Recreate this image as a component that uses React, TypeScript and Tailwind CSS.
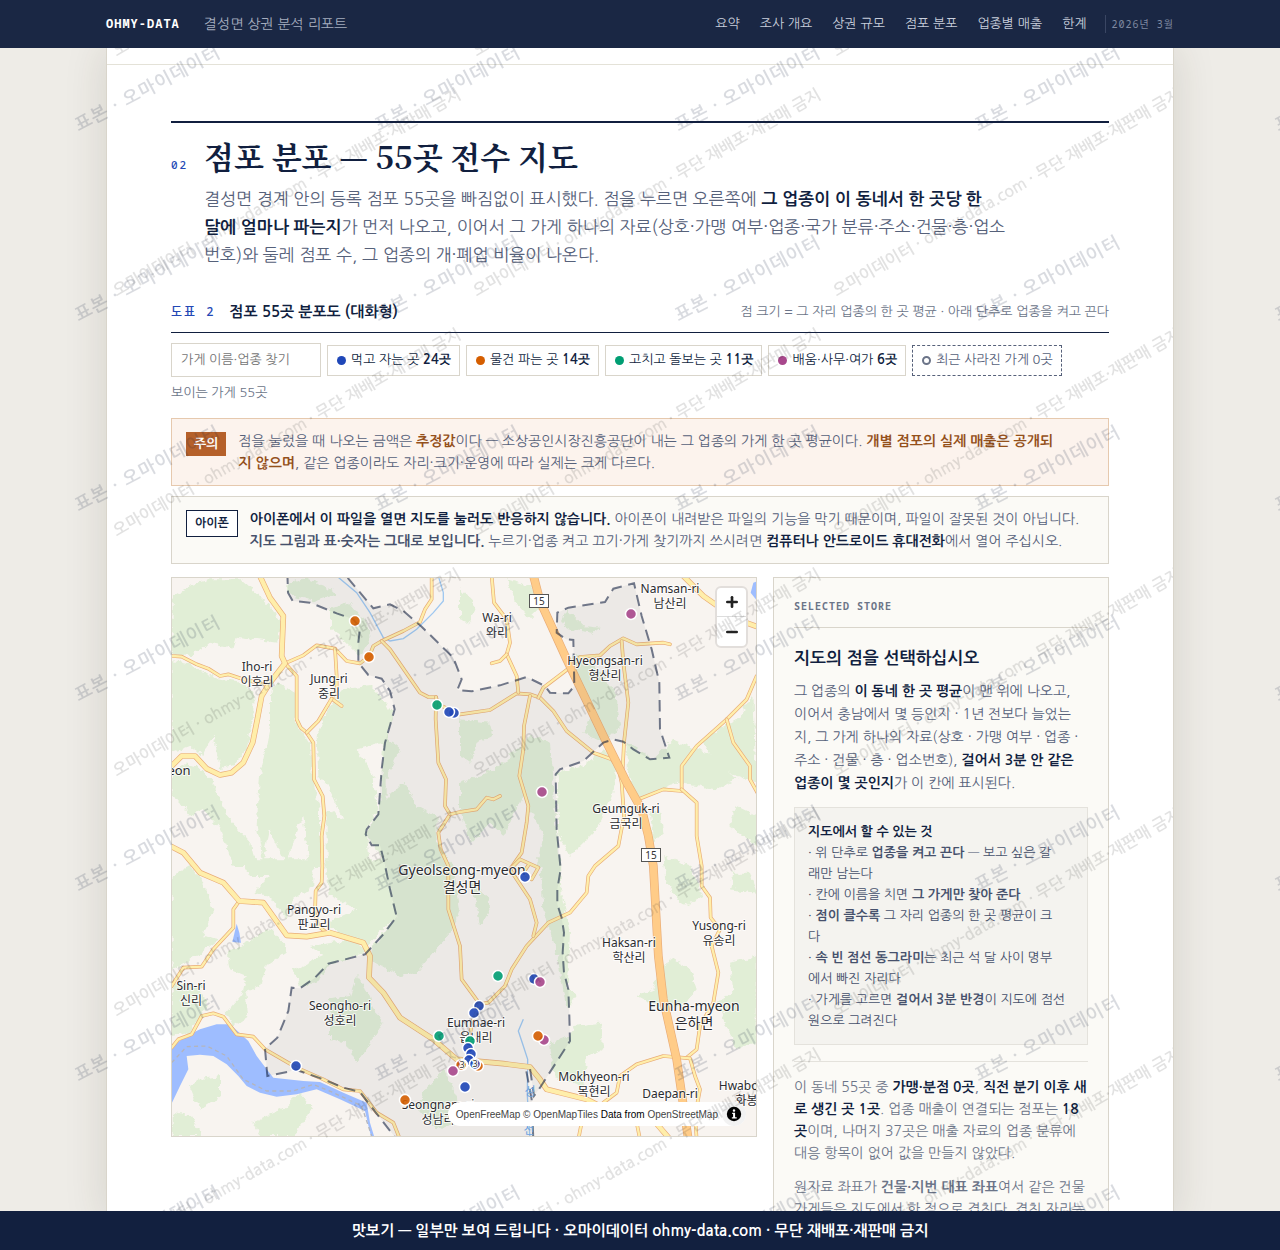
import { Minus, Plus } from 'lucide-react';

const sans = 'font-["Malgun_Gothic","NanumGothic","Noto_Sans_CJK_KR",sans-serif]';
const serif = 'font-["Noto_Serif_CJK_KR","Liberation_Serif",serif]';
const mono = 'font-["Noto_Sans_Mono","DejaVu_Sans_Mono","Noto_Sans_CJK_KR",monospace]';

const BLUE = '#1f47b8';
const ORANGE = '#d55e00';
const GREEN = '#009e73';
const PINK = '#a8478c';

const nav = ['요약', '조사 개요', '상권 규모', '점포 분포', '업종별 매출', '한계'];

const filters = [
  { label: '먹고 자는 곳', count: '24곳', dot: 'bg-[#1f47b8]' },
  { label: '물건 파는 곳', count: '14곳', dot: 'bg-[#d55e00]' },
  { label: '고치고 돌보는 곳', count: '11곳', dot: 'bg-[#009e73]' },
  { label: '배움·사무·여가', count: '6곳', dot: 'bg-[#a8478c]' },
];

// map geometry is drawn at three units per pixel
const greens = [
  '5,60 60,30 120,10 210,10 300,90 335,150 325,200 200,185 190,215 120,200 60,240 5,235',
  '345,30 400,5 470,30 500,55 440,75 370,60',
  '480,95 540,80 590,140 600,190 570,240 530,200 480,160',
  '5,255 60,265 130,305 200,315 250,350 250,420 230,520 190,570 150,580 130,470 100,540 60,510 5,530',
  '300,345 330,320 375,350 378,440 420,500 425,600 450,700 450,870 420,870 400,720 370,790 350,870 300,760 280,860 260,750 270,600 300,450',
  '5,600 40,565 80,570 130,620 170,720 240,800 260,870 190,870 150,760 100,700 60,720 5,650',
  '440,480 470,400 520,340 600,330 650,380 670,420 640,500 560,520 610,600 625,700 590,760 600,870 470,870 470,700 520,730 480,640 445,600',
  '640,480 690,520 650,600 650,670 700,620 740,690 800,720 800,800 850,870 870,1000 850,1060 740,1190 690,1200 650,1180 600,1150 610,1110 680,1020 645,870 590,770 630,700',
  '5,900 60,870 100,920 130,1000 100,1080 150,1090 50,1160 5,1180',
  '210,850 430,850 430,930 380,960 350,1030 300,960 250,950 300,900 240,900',
  '462,850 640,850 680,1020 590,1110 500,1070 470,1040 560,1000 480,960',
  '170,1130 300,1060 340,1100 350,1130 290,1170 270,1230 225,1250 235,1320 190,1350 170,1310 215,1260 230,1200 180,1180',
  '5,1220 90,1230 110,1290 60,1370 5,1380',
  '420,1110 560,1090 590,1130 480,1165 440,1220 390,1230 370,1180 460,1140',
  '480,1270 540,1260 560,1200 600,1260 610,1300 640,1340 560,1460 530,1400 480,1390',
  '60,1530 90,1510 150,1500 150,1560 90,1600',
  '250,1640 340,1600 390,1550 430,1600 370,1680 270,1680',
  '5,1610 60,1620 85,1660 90,1680 5,1680',
  '760,1550 820,1480 860,1560 870,1640 800,1660 740,1590',
  '1010,10 1080,30 1120,90 1080,130 1030,70',
  '870,40 920,90 900,140 870,130',
  '1190,100 1240,150 1290,155 1270,170 1190,160 1175,130',
  '1220,230 1260,260 1300,300 1340,360 1350,450 1300,500 1240,470 1270,400 1210,300',
  '870,430 960,440 970,480 920,500 900,560 870,540',
  '870,620 930,600 1000,560 1080,480 1140,500 1150,600 1160,760 1170,870 1100,870 1120,780 1060,660 1000,780 960,740 900,800 870,700',
  '1160,590 1240,570 1300,520 1340,560 1330,650 1280,760 1200,840 1165,780',
  '1370,500 1450,550 1510,490 1560,510 1640,540 1700,610 1640,640 1520,620 1400,670 1370,580',
  '1590,490 1700,430 1750,360 1760,620 1700,600 1640,560',
  '1700,690 1760,720 1760,810 1680,750',
  '1440,710 1470,700 1480,770 1450,800',
  '1480,840 1560,870 1600,960 1540,990 1490,920',
  '1110,850 1170,860 1175,960 1200,1070 1190,1230 1220,1260 1190,1300 1160,1130 1120,1000',
  '1470,1170 1510,1150 1560,1180 1580,1240 1540,1290 1480,1300 1400,1260 1450,1240',
  '1680,1160 1760,1140 1760,1400 1700,1420 1640,1280 1690,1250',
  '1210,1350 1290,1340 1300,1420 1250,1440 1240,1530 1150,1500 1140,1400 1200,1380',
  '900,900 950,960 960,1010 930,1050 920,990',
  '1690,890 1740,890 1760,950 1680,940',
];

const boundary =
  '352,-10 354,50 368,75 420,80 500,112 550,130 570,155 565,200 565,260 595,297 635,308 660,345 674,400 645,500 635,580 625,715 590,760 587,775 605,808 630,808 645,868 660,940 680,1022 640,1075 585,1135 475,1163 435,1205 390,1237 365,1235 355,1305 322,1385 285,1418 292,1500 380,1482 460,1510 520,1535 570,1548 610,1600 680,1690 1090,1690 1085,1570 1068,1480 1080,1478 1092,1560 1110,1535 1200,1395 1198,1320 1195,1240 1182,1190 1178,1130 1182,1070 1175,1025 1162,985 1162,940 1172,880 1160,760 1157,595 1170,580 1240,555 1300,500 1330,490 1360,497 1390,520 1440,550 1498,545 1470,460 1468,320 1445,220 1415,120 1392,22 1330,38 1305,78 1195,95 1162,110 1160,170 1188,190 1210,192 1213,330 1195,352 1140,350 1125,330 1070,303 990,328 905,346 862,342 875,310 850,245 755,152 700,105 660,85 610,97 520,-10';

const minorRoads = [
  '5,240 35,242 80,265 115,278 150,300 175,295 220,310 285,325',
  '345,262 400,238 440,208 495,218 530,255 570,262 598,240 610,210 635,195 700,165 750,138 765,100 785,70 785,0',
  '345,262 380,300 380,430 392,455 410,470 430,500 432,610 458,660 463,720 455,780 457,870 455,920 437,945 435,1010 445,1050 470,1070',
  '495,218 500,300 500,340 485,368 515,390',
  '485,368 445,435 410,470',
  '635,195 660,220 750,350 775,363 798,363 805,385 870,415 960,402 1040,352 1080,355 1110,365 1150,405 1190,465 1270,530 1325,550 1345,575 1355,620 1362,720 1345,810 1275,870 1255,900 1250,950 1200,1010 1135,1040 1070,1110 1025,1180 1005,1230 955,1280 925,1285',
  '798,363 797,430 805,560 828,610 825,690 840,715 805,770 812,820 835,870 835,1000 870,1110 875,1210 930,1285 905,1340 890,1460',
  '840,715 870,708 920,700 950,665 970,670 990,660',
  '1080,360 1062,450 1060,520 1048,600 1075,690 1070,740 1055,830 1020,880 1080,970 1100,1040 1090,1080',
  '1020,880 1050,850 1105,875 1085,910 1060,890 1075,868',
  '965,0 972,80 1010,130 1020,200 1010,235 1040,300 1045,350',
  '1010,235 990,255 965,262',
  '1105,365 1120,335 1195,278 1230,243 1290,238 1320,210 1360,187 1400,205 1480,200 1500,205',
  '1355,195 1360,260 1375,380 1362,500 1358,580',
  '1400,672 1480,640 1535,645 1535,570 1580,510 1670,430 1730,370 1760,300',
  '1535,640 1580,680 1580,780 1595,870 1595,930 1620,965 1622,1025 1650,1060 1625,1110 1645,1190 1630,1280 1590,1350 1580,1420 1550,1445',
  '1670,430 1690,500 1740,570 1740,610 1765,655',
  '208,975 190,1000 190,1055 130,1120 95,1172 40,1175 5,1230',
  '5,1415 25,1390 65,1375 95,1320 130,1312 160,1322 200,1375 250,1382 285,1420 380,1475 460,1510 520,1540 570,1545 620,1610 670,1640 690,1690',
  '1300,1580 1340,1550 1350,1500 1400,1465 1480,1440 1560,1447 1575,1500 1590,1540 1575,1620 1580,1690',
  '1225,1690 1235,1640',
  '1410,1690 1400,1640',
];

const majorRoads = [
  '265,-10 300,65 340,120 335,240 345,262 300,320 275,360 262,430 248,500 220,560 185,590 150,597 110,578 75,540 35,540 5,570',
  '5,812 40,830 90,890 160,920 208,975 280,980 350,1078 410,1082 480,1070 580,1100 600,1140 597,1205 640,1250 690,1325 790,1390 860,1450 1000,1463 1080,1473 1110,1510 1130,1540 1250,1570 1290,1590',
  '1530,-10 1600,60 1700,130 1770,155',
  '1440,1620 1500,1690',
];

const highway = '1088,-10 1110,75 1190,250 1310,500 1370,620 1415,700 1435,780 1450,870 1465,1140 1480,1270 1520,1450 1555,1690';

const labels: { x: number; y: number; en: string; ko: string; big?: boolean }[] = [
  { x: 498, y: 15, en: 'Namsan-ri', ko: '남산리' },
  { x: 325, y: 44, en: 'Wa-ri', ko: '와리' },
  { x: 433, y: 87, en: 'Hyeongsan-ri', ko: '형산리' },
  { x: 85, y: 93, en: 'Iho-ri', ko: '이호리' },
  { x: 157, y: 105, en: 'Jung-ri', ko: '중리' },
  { x: 454, y: 235, en: 'Geumguk-ri', ko: '금국리' },
  { x: 290, y: 297, en: 'Gyeolseong-myeon', ko: '결성면', big: true },
  { x: 142, y: 336, en: 'Pangyo-ri', ko: '판교리' },
  { x: 547, y: 352, en: 'Yusong-ri', ko: '유송리' },
  { x: 457, y: 369, en: 'Haksan-ri', ko: '학산리' },
  { x: 19, y: 412, en: 'Sin-ri', ko: '신리' },
  { x: 168, y: 432, en: 'Seongho-ri', ko: '성호리' },
  { x: 304, y: 449, en: 'Eumnae-ri', ko: '읍내리' },
  { x: 522, y: 433, en: 'Eunha-myeon', ko: '은하면', big: true },
  { x: 422, y: 503, en: 'Mokhyeon-ri', ko: '목현리' },
  { x: 498, y: 520, en: 'Daepan-ri', ko: '' },
  { x: 580, y: 512, en: 'Hwabong-ri', ko: '화봉리' },
  { x: 266, y: 531, en: 'Seongnam-ri', ko: '성남리' },
];

const stores: [number, number, string][] = [
  [183, 43, ORANGE],
  [197, 79, ORANGE],
  [459, 36, PINK],
  [265, 127, GREEN],
  [282, 135, BLUE],
  [277, 134, BLUE],
  [370, 214, PINK],
  [353, 299, BLUE],
  [326, 398, GREEN],
  [362, 401, BLUE],
  [368, 404, PINK],
  [307, 428, BLUE],
  [302, 435, BLUE],
  [267, 458, GREEN],
  [372, 462, PINK],
  [366, 458, ORANGE],
  [298, 463, GREEN],
  [296, 470, BLUE],
  [299, 476, BLUE],
  [297, 482, BLUE],
  [306, 488, ORANGE],
  [303, 486, BLUE],
  [290, 487, BLUE],
  [289, 487, ORANGE],
  [281, 493, PINK],
  [293, 509, BLUE],
  [124, 488, BLUE],
  [233, 522, ORANGE],
];

function Road({ points, width, casing = '#e9ac77', fill = '#fea' }: { points: string; width: number; casing?: string; fill?: string }) {
  return (
    <g fill="none" strokeLinejoin="round" strokeLinecap="round">
      <polyline points={points} stroke={casing} strokeWidth={width + 4} />
      <polyline points={points} stroke={fill} strokeWidth={width} />
    </g>
  );
}

function Shield({ x, y }: { x: number; y: number }) {
  return (
    <g transform={`translate(${x} ${y})`}>
      <rect x="-9.5" y="-6.5" width="19" height="13" fill="#fff" stroke="#555" />
      <text y="4" textAnchor="middle" fontSize="10" fill="#333">15</text>
    </g>
  );
}

function StoreMap() {
  return (
    <div className="relative h-[560px] min-w-0 overflow-hidden border border-[#d9d5cb] bg-[#f8f4f0]">
      <svg
        viewBox="0 0 584 558"
        preserveAspectRatio="xMidYMid slice"
        role="img"
        aria-label="점포 55곳 분포도"
        className='h-full w-full font-["Noto_Sans","Noto_Sans_CJK_KR",sans-serif]'
      >
        <defs>
          <filter id="rough" x="0" y="0" width="100%" height="100%">
            <feTurbulence type="fractalNoise" baseFrequency="0.05" numOctaves="3" seed="4" />
            <feDisplacementMap in="SourceGraphic" scale="22" xChannelSelector="R" yChannelSelector="G" />
          </filter>
        </defs>
        <g transform="translate(-2 -2) scale(0.333333)">
          <g fill="#e1eed6" filter="url(#rough)">
            {greens.map((points) => (
              <polygon key={points} points={points} />
            ))}
          </g>
          <g fill="#9ebdff">
            <path d="M5 1415 40 1385 90 1360 140 1345 180 1345 208 1370 235 1395 260 1440 290 1480 310 1505 400 1515 450 1518 520 1550 590 1580 600 1640 615 1690 605 1690 585 1605 510 1570 440 1540 380 1555 320 1562 270 1550 230 1530 205 1500 170 1465 130 1440 90 1436 50 1440 55 1480 30 1530 5 1582Z" />
            <path d="M200 1043 208 1070 213 1100 187 1098Z" />
            <path d="M1765 15 1750 20 1742 50 1765 80Z" />
          </g>
          <g fill="none" stroke="#a0c8f0" strokeWidth="4">
            <polyline points="500,0 560,50 600,110 640,185 660,195 700,188 740,160 790,110 820,75 820,50 805,0" />
            <polyline points="1060,1330 1045,1365 1060,1410 1073,1450 1072,1560 1080,1690" />
          </g>
          <path d="M5 1460 50 1412 110 1410 170 1440 220 1510 290 1545 370 1545 430 1525 490 1550 575 1590 605 1680" fill="none" stroke="#b3b5bd" strokeWidth="4" strokeDasharray="12 10" />
          {minorRoads.map((points) => (
            <Road key={points} points={points} width={7} />
          ))}
          {majorRoads.map((points) => (
            <Road key={points} points={points} width={13} />
          ))}
          <Road points={highway} width={22} fill="#fc8" />
          <polygon points={boundary} fill="#111f3f" fillOpacity="0.05" stroke="#111f3f" strokeOpacity="0.58" strokeWidth="6" strokeDasharray="34 20" />
        </g>
        <Shield x={367} y={23} />
        <Shield x={479} y={277} />
        <g textAnchor="middle" fill="#2c2c30" stroke="#fff" strokeOpacity="0.8" strokeWidth="2" paintOrder="stroke" strokeLinejoin="round">
          {labels.map(({ x, y, en, ko, big }) => (
            <text key={en} x={x} y={y} fontSize={big ? 14 : 12}>
              <tspan x={x}>{en}</tspan>
              <tspan x={x} dy={big ? 17 : 15}>{ko}</tspan>
            </text>
          ))}
          <text x="7" y="197" fontSize="13">eon</text>
        </g>
        <g textAnchor="middle" fill="#6da3e0" fontSize="12">
          <text x="358" y="518">성</text>
          <text x="357" y="556">천</text>
        </g>
        {stores.map(([x, y, color]) => (
          <circle key={`${x}-${y}`} cx={x} cy={y} r="5.5" fill={color} fillOpacity="0.9" stroke="#fff" strokeWidth="1.5" />
        ))}
        <g textAnchor="middle" fontSize="9" fill="#333" stroke="#fff" strokeWidth="2" paintOrder="stroke">
          <text x="290" y="490">3</text>
          <text x="303" y="489">3</text>
        </g>
      </svg>
      <div className="absolute right-2 top-2 flex flex-col rounded-md border-2 border-[#e2dedb] bg-white text-[#222]">
        <button type="button" aria-label="확대" className="grid size-[29px] place-items-center border-b border-[#ddd]">
          <Plus className="size-4" strokeWidth={4} />
        </button>
        <button type="button" aria-label="축소" className="grid size-[29px] place-items-center">
          <Minus className="size-4" strokeWidth={4} />
        </button>
      </div>
      <div className='absolute bottom-[10px] right-[10px] flex h-6 items-center gap-1 rounded-full bg-white pl-2 font-["Liberation_Sans",sans-serif] text-[10px] text-black'>
        <p>
          <a href="#openfreemap" className="text-[#444]">OpenFreeMap</a>{' '}
          <a href="#openmaptiles" className="text-[#444]">© OpenMapTiles</a> Data from{' '}
          <a href="#osm" className="text-[#444]">OpenStreetMap</a>
        </p>
        <button type="button" aria-label="출처" className="grid size-6 place-items-center rounded-full bg-[#f2f2f2]">
          <svg viewBox="0 0 20 20" className="size-[18px]">
            <circle cx="10" cy="10" r="8" />
            <path d="M8 8.5h3.2v5H13V15H7.6v-1.5H9V10H8ZM10 4.6a1.4 1.4 0 1 1 0 2.8 1.4 1.4 0 0 1 0-2.8Z" fill="#fff" />
          </svg>
        </button>
      </div>
    </div>
  );
}

function Filters() {
  return (
    <div className="mt-[10px] flex flex-wrap items-center gap-[6px]">
      <input
        type="search"
        aria-label="가게 이름·업종 찾기"
        placeholder="가게 이름·업종 찾기"
        className="h-[34px] w-[150px] border border-[#d9d5cb] bg-white px-[9px] text-[13px] placeholder:text-[#757575]"
      />
      {filters.map(({ label, count, dot }) => (
        <button key={label} type="button" className="flex h-[31px] items-center gap-[5px] border border-[#d9d5cb] bg-white pl-[9px] pr-2 text-[13px]">
          <span className={`size-[9px] rounded-full ${dot}`} />
          <span>
            {label} <b className="font-semibold">{count}</b>
          </span>
        </button>
      ))}
      <button type="button" className="flex h-[31px] items-center gap-[5px] border border-dashed border-[#56617a] bg-white pl-[9px] pr-2 text-[13px] text-[#56617a]">
        <span className="size-[9px] rounded-full border-2 border-[#6b7488]" />
        최근 사라진 가게 0곳
      </button>
      <span className="text-[13px] leading-5 text-[#6b7488]">보이는 가게 55곳</span>
    </div>
  );
}

function StorePanel() {
  return (
    <aside className="border border-[#d9d5cb] bg-[#fbfaf6] px-5">
      <p className={`${mono} border-b border-[#d9d5cb] pb-[11px] pt-[18px] text-[10px] font-bold leading-5 tracking-[1px] text-[#6b7488]`}>SELECTED STORE</p>
      <h4 className="mt-[19px] text-[17px] font-semibold leading-6">지도의 점을 선택하십시오</h4>
      <p className="mt-[9px] text-[14px] leading-[23px] text-[#56617a]">
        그 업종의 <b className="font-semibold text-[#111f3f]">이 동네 한 곳 평균</b>이 맨 위에 나오고,<br />
        이어서 충남에서 몇 등인지 · 1년 전보다 늘었는<br />
        지, 그 가게 하나의 자료(상호 · 가맹 여부 · 업종 ·<br />
        주소 · 건물 · 층 · 업소번호), <b className="font-semibold text-[#111f3f]">걸어서 3분 안 같은<br />
        업종이 몇 곳인지</b>가 이 칸에 표시된다.
      </p>
      <div className="mt-3 border border-[#e4e2dc] bg-[#f4f3ef] px-[13px] py-[13px] text-[13px] leading-[21px] text-[#46516c]">
        <b className="block font-semibold text-[#111f3f]">지도에서 할 수 있는 것</b>
        · 위 단추로 <b className="font-semibold">업종을 켜고 끈다</b> — 보고 싶은 갈<br />
        래만 남는다<br />
        · 칸에 이름을 치면 <b className="font-semibold">그 가게만 찾아 준다</b><br />
        · <b className="font-semibold">점이 클수록</b> 그 자리 업종의 한 곳 평균이 크<br />
        다<br />
        · <b className="font-semibold">속 빈 점선 동그라미</b>는 최근 석 달 사이 명부<br />
        에서 빠진 자리다<br />
        · 가게를 고르면 <b className="font-semibold">걸어서 3분 반경</b>이 지도에 점선<br />
        원으로 그려진다
      </div>
      <div className="mt-4 border-t border-[#e4e2dc] pt-[14px] text-[14px] leading-[22px] text-[#6b7488]">
        <p>
          이 동네 55곳 중 <b className="font-semibold text-[#111f3f]">가맹·분점 0곳</b>, <b className="font-semibold text-[#111f3f]">직전 분기 이후 새<br />
          로 생긴 곳 1곳</b>. 업종 매출이 연결되는 점포는 <b className="font-semibold text-[#111f3f]">18<br />
          곳</b>이며, 나머지 37곳은 매출 자료의 업종 분류에<br />
          대응 항목이 없어 값을 만들지 않았다.
        </p>
        <p className="mt-3">
          원자료 좌표가 <b className="font-semibold">건물·지번 대표 좌표</b>여서 같은 건물<br />
          가게들은 지도에서 한 점으로 겹친다. 겹친 자리는
        </p>
      </div>
    </aside>
  );
}

export default function App() {
  return (
    <div className={`${sans} relative flex h-screen flex-col overflow-hidden bg-[#eeece7] text-[#111f3f]`}>
      <header className="relative z-20 shrink-0 bg-[#1a2744]">
        <div className="mx-auto flex h-12 max-w-[1068px] items-center">
          <a href="#top" className={`${mono} text-[12px] font-bold tracking-[1px] text-white`}>OHMY-DATA</a>
          <span className="ml-6 text-[14px] text-[#a5adbf]">결성면 상권 분석 리포트</span>
          <nav className="ml-auto flex gap-5 text-[13px] text-[#c9cfdc]">
            {nav.map((item) => (
              <a key={item} href={`#${item}`}>{item}</a>
            ))}
          </nav>
          <span className={`${mono} ml-[18px] border-l border-[#3a4663] pl-[6px] text-[10px] leading-[18px] tracking-[1px] text-[#7f89a0]`}>2026년 3월</span>
        </div>
      </header>

      <div className="min-h-0 flex-1 overflow-hidden">
        <main className="relative mx-auto min-h-full max-w-[1068px] border-x border-[#d9d5cb] bg-white shadow-[0_0_40px_rgba(60,50,30,0.14)]">
          <div className="h-[17px] border-b border-[#e4e2d8]" />
          <section className="px-16 pt-14">
            <div className="flex items-baseline border-t-2 border-[#111f3f] pt-[10px]">
              <span className={`${mono} w-[33px] shrink-0 text-[11px] font-medium tracking-[2px] text-[#2347b5]`}>02</span>
              <div>
                <h2 className={`${serif} text-[31px] font-bold leading-[46px]`}>점포 분포 — 55곳 전수 지도</h2>
                <p className="mt-[6px] text-[17px] leading-[27px] text-[#56617a]">
                  결성면 경계 안의 등록 점포 55곳을 빠짐없이 표시했다. 점을 누르면 오른쪽에{' '}
                  <b className="font-semibold text-[#111f3f]">그 업종이 이 동네서 한 곳당 한<br />
                  달에 얼마나 파는지</b>가 먼저 나오고, 이어서 그 가게 하나의 자료(상호·가맹 여부·업종·국가 분류·주소·건물·층·업소<br />
                  번호)와 둘레 점포 수, 그 업종의 개·폐업 비율이 나온다.
                </p>
              </div>
            </div>

            <div className="mt-[33px] flex items-center justify-between border-b border-[#111f3f] pb-[9px] leading-[22px]">
              <h3 className="flex items-center gap-[14px] text-[15px] font-semibold">
                <span className={`${mono} text-[12px] font-medium tracking-[2px] text-[#2347b5]`}>도표 2</span>
                점포 55곳 분포도 (대화형)
              </h3>
              <span className="text-[13px] text-[#6b7488]">점 크기 = 그 자리 업종의 한 곳 평균 · 아래 단추로 업종을 켜고 끈다</span>
            </div>

            <Filters />

            <div className="mt-[15px] flex items-start gap-3 border border-[#e6c9ae] bg-[#fcf3ed] px-[14px] py-[11px]">
              <b className="mt-[2px] shrink-0 bg-[#b5602a] px-2 text-[13px] font-semibold leading-6 text-white">주의</b>
              <p className="text-[14px] leading-[22px] text-[#56617a]">
                점을 눌렀을 때 나오는 금액은 <b className="font-semibold text-[#94501b]">추정값</b>이다 — 소상공인시장진흥공단이 내는 그 업종의 가게 한 곳 평균이다.{' '}
                <b className="font-semibold text-[#94501b]">개별 점포의 실제 매출은 공개되<br />
                지 않으며</b>, 같은 업종이라도 자리·크기·운영에 따라 실제는 크게 다르다.
              </p>
            </div>

            <div className="mt-[10px] flex items-start gap-3 border border-[#d9d5cb] bg-[#fbfaf6] px-[14px] py-[11px]">
              <b className="mt-[2px] shrink-0 border border-[#111f3f] bg-white px-2 text-[12px] font-semibold leading-[25px]">아이폰</b>
              <p className="text-[14px] leading-[22px] text-[#56617a]">
                <b className="font-semibold text-[#111f3f]">아이폰에서 이 파일을 열면 지도를 눌러도 반응하지 않습니다.</b> 아이폰이 내려받은 파일의 기능을 막기 때문이며, 파일이 잘못된 것이 아닙니다.<br />
                <b className="font-semibold text-[#46516c]">지도 그림과 표·숫자는 그대로 보입니다.</b> 누르기·업종 켜고 끄기·가게 찾기까지 쓰시려면{' '}
                <b className="font-semibold text-[#111f3f]">컴퓨터나 안드로이드 휴대전화</b>에서 열어 주십시오.
              </p>
            </div>

            <div className="mt-[13px] grid grid-cols-[1fr_336px] items-start gap-4">
              <StoreMap />
              <StorePanel />
            </div>
          </section>

          <svg aria-hidden="true" className="pointer-events-none absolute inset-0 z-10 h-full w-full">
            <defs>
              <pattern id="notice" width="360" height="240" patternUnits="userSpaceOnUse" y="22">
                <text transform="translate(10 227) rotate(-30)" fontSize="16" fontWeight="600" fill="#222" fillOpacity="0.13">
                  오마이데이터 · ohmy-data.com · 무단 재배포·재판매 금지
                </text>
              </pattern>
            </defs>
            <rect width="100%" height="100%" fill="url(#notice)" />
          </svg>
        </main>
      </div>

      <svg aria-hidden="true" className="pointer-events-none absolute inset-0 z-10 h-full w-full">
        <defs>
          <pattern id="sample" width="300" height="190" patternUnits="userSpaceOnUse" x="60" y="-20">
            <text transform="translate(19 152) rotate(-28)" fontSize="18" fontWeight="600" fill="#111f3f" fillOpacity="0.16" letterSpacing="1">
              표본 · 오마이데이터
            </text>
          </pattern>
        </defs>
        <rect width="100%" height="100%" fill="url(#sample)" />
      </svg>

      <footer className="relative z-20 shrink-0 bg-[#12203f] text-center text-[15px] font-bold leading-[39px] text-white">
        맛보기 — 일부만 보여 드립니다 · 오마이데이터 ohmy-data.com · 무단 재배포·재판매 금지
      </footer>
    </div>
  );
}
